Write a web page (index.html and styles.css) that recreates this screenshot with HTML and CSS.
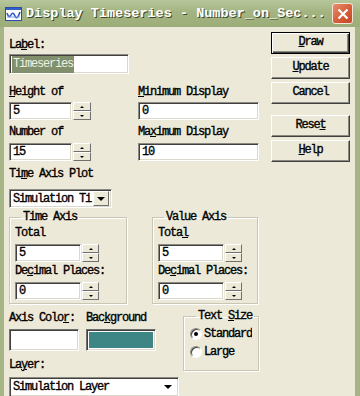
FILE: index.html
```html
<!DOCTYPE html>
<html lang="en">
<head>
  <meta charset="UTF-8">
  <title>Display Timeseries</title>
  <link rel="stylesheet" href="styles.css">
</head>
<body>
  <div class="window">
    <div class="titlebar">
      <svg class="appicon" width="17" height="14" viewBox="0 0 17 14">
        <rect x="0.5" y="0.5" width="16" height="13" fill="#fff" stroke="#2a4fa8"/>
        <rect x="1" y="1" width="15" height="2" fill="#2f5fc8"/>
        <path d="M2 6 Q4 12 6 8 T10 9 T15 5" fill="none" stroke="#2c58c0" stroke-width="1.6"/>
        <path d="M2 10 L15 10" stroke="#7aa0e8" stroke-width="1"/>
      </svg>
      <span class="title">Display Timeseries - Number_on_Sec...</span>
      <span class="close">
        <svg width="12" height="12" viewBox="0 0 12 12">
          <path d="M1.5 1.5 L10.5 10.5 M10.5 1.5 L1.5 10.5" stroke="#fff" stroke-width="2.2"/>
        </svg>
      </span>
    </div>

    <div class="frame">
      <div class="main">
        <div class="lbl">La<u>b</u>el:</div>
        <div class="edit label-edit"><span class="sel">Timeseries</span></div>

        <div class="row row-first">
          <div class="col">
            <div class="lbl"><u>H</u>eight of</div>
            <div class="spin">
              <div class="edit num">5</div>
              <div class="arrows"><span class="ab"><i class="up"></i></span><span class="ab"><i class="down"></i></span></div>
            </div>
          </div>
          <div class="col">
            <div class="lbl"><u>M</u>inimum Display</div>
            <div class="edit long">0</div>
          </div>
        </div>

        <div class="row row-second">
          <div class="col">
            <div class="lbl">Number of</div>
            <div class="spin">
              <div class="edit num">15</div>
              <div class="arrows"><span class="ab"><i class="up"></i></span><span class="ab"><i class="down"></i></span></div>
            </div>
          </div>
          <div class="col">
            <div class="lbl">Ma<u>x</u>imum Display</div>
            <div class="edit long">10</div>
          </div>
        </div>

        <div class="lbl plot-lbl">Ti<u>m</u>e Axis Plot</div>
        <div class="combo plot-combo">
          <span class="combo-text">Simulation Ti</span>
          <span class="drop"><i class="down big"></i></span>
        </div>

        <div class="groups">
          <fieldset class="group time-group">
            <legend>Time Axis</legend>
            <div class="lbl first">Total</div>
            <div class="spin">
              <div class="edit gnum">5</div>
              <div class="arrows"><span class="ab"><i class="up"></i></span><span class="ab"><i class="down"></i></span></div>
            </div>
            <div class="lbl">De<u>c</u>imal Places:</div>
            <div class="spin">
              <div class="edit gnum">0</div>
              <div class="arrows"><span class="ab"><i class="up"></i></span><span class="ab"><i class="down"></i></span></div>
            </div>
          </fieldset>
          <fieldset class="group value-group">
            <legend>Value Axis</legend>
            <div class="lbl first">Tota<u>l</u></div>
            <div class="spin">
              <div class="edit gnum">5</div>
              <div class="arrows"><span class="ab"><i class="up"></i></span><span class="ab"><i class="down"></i></span></div>
            </div>
            <div class="lbl">De<u>c</u>imal Places:</div>
            <div class="spin">
              <div class="edit gnum">0</div>
              <div class="arrows"><span class="ab"><i class="up"></i></span><span class="ab"><i class="down"></i></span></div>
            </div>
          </fieldset>
        </div>

        <div class="lower">
          <div class="lower-left">
            <div class="colors-lbl">
              <span class="lbl">Axis Colo<u>r</u>:</span>
              <span class="lbl">Bac<u>k</u>ground</span>
            </div>
            <div class="swatches">
              <span class="swatch white"></span>
              <span class="swatch teal"></span>
            </div>
            <div class="lbl layer-lbl">La<u>y</u>er:</div>
            <div class="combo layer-combo">
              <span class="combo-text">Simulation Layer</span>
              <span class="drop flat"><i class="down big"></i></span>
            </div>
          </div>
          <fieldset class="group size-group">
            <legend>Text <u>S</u>ize</legend>
            <div class="radio first"><span class="dot checked"></span><span class="rtext">Standard</span></div>
            <div class="radio"><span class="dot"></span><span class="rtext">Large</span></div>
          </fieldset>
        </div>
      </div>

      <div class="side">
        <div class="btn default"><u>D</u>raw</div>
        <div class="btn"><u>U</u>pdate</div>
        <div class="btn">Cancel</div>
        <div class="btn gap">Rese<u>t</u></div>
        <div class="btn"><u>H</u>elp</div>
      </div>
    </div>
  </div>
</body>
</html>
```

FILE: styles.css
```css
* {
  box-sizing: border-box;
}

body {
  margin: 0;
  background: #ece9d8;
  font-family: "Liberation Mono", monospace;
  font-size: 12px;
  letter-spacing: -1.2px;
  color: #000;
  -webkit-text-stroke: 0.35px #000;
}

.window {
  width: 360px;
  height: 396px;
  display: flex;
  flex-direction: column;
  overflow: hidden;
}

/* title bar */
.titlebar {
  height: 27px;
  flex: none;
  display: flex;
  align-items: center;
  padding: 0 4px 0 5px;
  background: linear-gradient(#b7c79c, #a3b481 45%, #9cad7a);
}

.appicon {
  flex: none;
  margin-right: 4px;
}

.title {
  flex: 1;
  font-weight: bold;
  font-size: 13.5px;
  letter-spacing: 0;
  color: #fff;
  -webkit-text-stroke: 0;
  text-shadow: 1px 1px 0 #3d4a2a;
  white-space: nowrap;
  overflow: hidden;
}

.close {
  flex: none;
  width: 21px;
  height: 21px;
  margin-left: 6px;
  margin-right: 3px;
  border: 1px solid #f3e6d8;
  border-radius: 3px;
  background: linear-gradient(135deg, #e78e6c, #d35a35 60%, #c34726);
  display: flex;
  align-items: center;
  justify-content: center;
}

/* frame */
.frame {
  flex: 1;
  display: flex;
  border-left: 4px solid #a5b585;
  border-right: 5px solid #a5b585;
}

.main {
  width: 262px;
  padding: 12px 0 0 5px;
}

.side {
  margin-left: auto;
  width: 84px;
  padding: 5px 0 0 0;
}

.lbl {
  display: block;
  line-height: 12px;
  height: 12px;
  white-space: nowrap;
}

u {
  text-decoration-thickness: 1px;
  text-underline-offset: 1px;
}

/* edits */
.edit {
  background: #fff;
  border: 1px solid;
  border-color: #8c8a80 #fff #fff #8c8a80;
  box-shadow: inset 1px 1px 0 #404040, inset -1px -1px 0 #dcd9cc;
  height: 18px;
  line-height: 16px;
  padding-left: 3px;
  white-space: nowrap;
  overflow: hidden;
}

.label-edit {
  width: 120px;
  height: 20px;
  margin-top: 3px;
  line-height: 18px;
  padding-left: 2px;
}

.sel {
  background: #818f6d;
  color: #eef1e0;
  -webkit-text-stroke: 0;
  padding: 1px 1px 2px 1px;
}

.row {
  display: flex;
}

.row-first {
  margin-top: 12px;
}

.row-second {
  margin-top: 6px;
}

.row .col:first-child {
  width: 129px;
}

.row .edit {
  margin-top: 4px;
}

.row-second .edit,
.row-second .arrows {
  margin-top: 5px;
}

.num {
  width: 63px;
}

.long {
  width: 121px;
}

/* spinner */
.spin {
  display: flex;
  gap: 1px;
}

.arrows {
  display: flex;
  flex-direction: column;
  width: 18px;
  height: 18px;
  margin-top: 4px;
}

.group .arrows {
  margin-top: 0;
  width: 17px;
}

.ab {
  flex: 1;
  background: #ece9d8;
  border: 1px solid;
  border-color: #fff #707070 #707070 #fff;
  display: flex;
  align-items: center;
  justify-content: center;
}

.up {
  width: 0;
  height: 0;
  border-left: 2px solid transparent;
  border-right: 2px solid transparent;
  border-bottom: 2px solid #000;
}

.down {
  width: 0;
  height: 0;
  border-left: 2px solid transparent;
  border-right: 2px solid transparent;
  border-top: 2px solid #000;
}

.down.big {
  border-left-width: 4px;
  border-right-width: 4px;
  border-top-width: 4px;
}

/* combos */
.combo {
  display: flex;
  align-items: center;
  background: #fff;
  border: 1px solid;
  border-color: #8c8a80 #fff #fff #8c8a80;
  box-shadow: inset 1px 1px 0 #404040, inset -1px -1px 0 #dcd9cc;
  height: 19px;
  padding: 2px 2px 2px 3px;
}

.combo-text {
  flex: 1;
  white-space: nowrap;
  overflow: hidden;
  line-height: 14px;
}

.drop {
  flex: none;
  width: 16px;
  height: 15px;
  background: #ece9d8;
  border: 1px solid;
  border-color: #fff #707070 #707070 #fff;
  display: flex;
  align-items: center;
  justify-content: center;
}

.drop.flat {
  background: #fff;
  border-color: #fff;
}

.plot-lbl {
  margin-top: 7px;
}

.plot-combo {
  width: 103px;
  margin-top: 9px;
}

/* group boxes */
.groups {
  display: flex;
  gap: 25px;
  margin-top: 3px;
}

.group {
  margin: 0;
  padding: 0 0 0 5px;
  border: 1px solid #c9c6b6;
  box-shadow: inset 1px 1px 0 #fff, 1px 1px 0 #fff;
  min-width: 0;
}

.group legend {
  padding: 0 2px;
  margin-left: 6px;
  line-height: 12px;
}

.group .lbl.first {
  margin-top: 4px;
}

.group .spin {
  margin-top: 5px;
  margin-bottom: 3px;
}

.gnum {
  width: 66px;
}

.time-group {
  width: 118px;
  height: 93px;
}

.value-group {
  width: 106px;
  height: 93px;
}

/* lower section */
.lower {
  display: flex;
  margin-top: 8px;
}

.lower-left {
  width: 174px;
}

.colors-lbl {
  display: flex;
  gap: 11px;
}

.swatches {
  display: flex;
  gap: 7px;
  margin-top: 5px;
}

.swatch {
  width: 70px;
  height: 22px;
  border: 1px solid;
  border-color: #707070 #fff #fff #707070;
  box-shadow: inset 1px 1px 0 #404040, inset -1px -1px 0 #dcd9cc;
}

.swatch.white {
  background: #fff;
}

.swatch.teal {
  background: #3e8685;
  box-shadow: inset 1px 1px 0 #404040, inset -1px -1px 0 #dcd9cc, inset 2px 2px 0 #fff, inset -2px -2px 0 #fff;
}

.layer-lbl {
  margin-top: 8px;
}

.layer-combo {
  width: 170px;
  height: 20px;
  margin-top: 6px;
}

.size-group {
  width: 76px;
  height: 61px;
  margin-top: -2px;
  padding-left: 6px;
}

.radio {
  display: flex;
  align-items: center;
  height: 18px;
  white-space: nowrap;
}

.radio.first {
  margin-top: 3px;
}

.rtext {
  overflow: hidden;
  width: 48px;
  margin-left: 2px;
}

.dot {
  flex: none;
  width: 12px;
  height: 12px;
  border-radius: 50%;
  background: #fff;
  border: 1px solid;
  border-color: #8c8a80 #fff #fff #8c8a80;
  box-shadow: inset 1px 1px 0 #404040;
  display: flex;
  align-items: center;
  justify-content: center;
}

.dot.checked::after {
  content: "";
  width: 4px;
  height: 4px;
  border-radius: 50%;
  background: #000;
}

/* buttons */
.btn {
  width: 79px;
  height: 22px;
  margin-bottom: 3px;
  text-align: center;
  line-height: 19px;
  background: #ece9d8;
  border: 1px solid;
  border-color: #fff #404040 #404040 #fff;
  box-shadow: inset -1px -1px 0 #8c8a80;
}

.btn.default {
  border: 1px solid #000;
  box-shadow: inset 1px 1px 0 #fff, inset -1px -1px 0 #404040, inset -2px -2px 0 #8c8a80;
}

.btn.gap {
  margin-top: 11px;
}
```
